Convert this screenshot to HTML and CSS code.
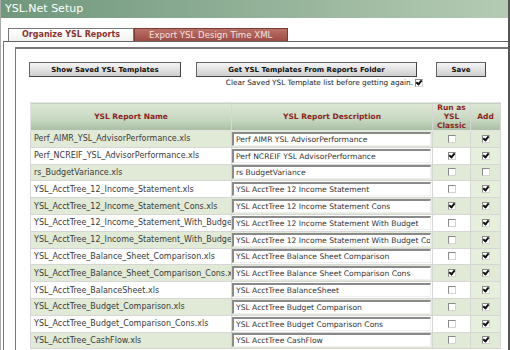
FILE: index.html
```html
<!DOCTYPE html>
<html lang="en">
<head>
  <meta charset="UTF-8" />
  <title>YSL.Net Setup</title>
  <link rel="stylesheet" href="styles.css">
</head>
<body>

<div class="window">
  <div class="titlebar">YSL.Net Setup</div>

  <div class="tabs">
    <div class="tab active">Organize YSL Reports</div>
    <div class="tab">Export YSL Design Time XML</div>
  </div>

  <div class="tabpanel">
    <div class="panel">

      <!-- toolbar -->
      <div class="toolbar">
        <button class="btn btn-show">Show Saved YSL Templates</button>
        <div class="getgroup">
          <button class="btn btn-get">Get YSL Templates From Reports Folder</button>
          <div class="clear">Clear Saved YSL Template list before getting again. <span class="cb on"></span></div>
        </div>
        <button class="btn btn-save">Save</button>
      </div>

      <table class="reports">
        <thead>
          <tr>
            <th class="c-name">YSL Report Name</th>
            <th class="c-desc">YSL Report Description</th>
            <th class="c-run">Run as YSL Classic</th>
            <th class="c-add">Add</th>
          </tr>
        </thead>
        <tbody>
          <tr class="alt">
            <td>Perf_AIMR_YSL_AdvisorPerformance.xls</td>
            <td><input class="desc" type="text" value="Perf AIMR YSL AdvisorPerformance"></td>
            <td class="chk"><span class="cb"></span></td>
            <td class="chk"><span class="cb on"></span></td>
          </tr>
          <tr>
            <td>Perf_NCREIF_YSL_AdvisorPerformance.xls</td>
            <td><input class="desc" type="text" value="Perf NCREIF YSL AdvisorPerformance"></td>
            <td class="chk"><span class="cb on"></span></td>
            <td class="chk"><span class="cb on"></span></td>
          </tr>
          <tr class="alt">
            <td>rs_BudgetVariance.xls</td>
            <td><input class="desc" type="text" value="rs BudgetVariance"></td>
            <td class="chk"><span class="cb"></span></td>
            <td class="chk"><span class="cb"></span></td>
          </tr>
          <tr>
            <td>YSL_AcctTree_12_Income_Statement.xls</td>
            <td><input class="desc" type="text" value="YSL AcctTree 12 Income Statement"></td>
            <td class="chk"><span class="cb"></span></td>
            <td class="chk"><span class="cb on"></span></td>
          </tr>
          <tr class="alt">
            <td>YSL_AcctTree_12_Income_Statement_Cons.xls</td>
            <td><input class="desc" type="text" value="YSL AcctTree 12 Income Statement Cons"></td>
            <td class="chk"><span class="cb on"></span></td>
            <td class="chk"><span class="cb on"></span></td>
          </tr>
          <tr>
            <td>YSL_AcctTree_12_Income_Statement_With_Budget.xls</td>
            <td><input class="desc" type="text" value="YSL AcctTree 12 Income Statement With Budget"></td>
            <td class="chk"><span class="cb"></span></td>
            <td class="chk"><span class="cb on"></span></td>
          </tr>
          <tr class="alt">
            <td>YSL_AcctTree_12_Income_Statement_With_Budget_Cons.xls</td>
            <td><input class="desc" type="text" value="YSL AcctTree 12 Income Statement With Budget Cons"></td>
            <td class="chk"><span class="cb"></span></td>
            <td class="chk"><span class="cb on"></span></td>
          </tr>
          <tr>
            <td>YSL_AcctTree_Balance_Sheet_Comparison.xls</td>
            <td><input class="desc" type="text" value="YSL AcctTree Balance Sheet Comparison"></td>
            <td class="chk"><span class="cb"></span></td>
            <td class="chk"><span class="cb on"></span></td>
          </tr>
          <tr class="alt">
            <td>YSL_AcctTree_Balance_Sheet_Comparison_Cons.xls</td>
            <td><input class="desc" type="text" value="YSL AcctTree Balance Sheet Comparison Cons"></td>
            <td class="chk"><span class="cb on"></span></td>
            <td class="chk"><span class="cb on"></span></td>
          </tr>
          <tr>
            <td>YSL_AcctTree_BalanceSheet.xls</td>
            <td><input class="desc" type="text" value="YSL AcctTree BalanceSheet"></td>
            <td class="chk"><span class="cb"></span></td>
            <td class="chk"><span class="cb on"></span></td>
          </tr>
          <tr class="alt">
            <td>YSL_AcctTree_Budget_Comparison.xls</td>
            <td><input class="desc" type="text" value="YSL AcctTree Budget Comparison"></td>
            <td class="chk"><span class="cb"></span></td>
            <td class="chk"><span class="cb on"></span></td>
          </tr>
          <tr>
            <td>YSL_AcctTree_Budget_Comparison_Cons.xls</td>
            <td><input class="desc" type="text" value="YSL AcctTree Budget Comparison Cons"></td>
            <td class="chk"><span class="cb"></span></td>
            <td class="chk"><span class="cb on"></span></td>
          </tr>
          <tr class="alt">
            <td>YSL_AcctTree_CashFlow.xls</td>
            <td><input class="desc" type="text" value="YSL AcctTree CashFlow"></td>
            <td class="chk"><span class="cb"></span></td>
            <td class="chk"><span class="cb on"></span></td>
          </tr>
        </tbody>
      </table>

    </div>
  </div>
</div>

</body>
</html>
```

FILE: styles.css
```css
* { box-sizing: border-box; margin: 0; padding: 0; }
html, body {
  width: 100%;
  height: 100%;
  overflow: hidden;
  background: #fff;
  font-family: "DejaVu Sans", Verdana, sans-serif;
  color: #333;
}

.window {
  height: 350px;
  border-left: 1px solid #aaa;
  border-right: 2px solid #555;
  overflow: hidden;
}

.titlebar {
  height: 18px;
  padding-left: 4px;
  line-height: 18px;
  font-size: 11px;
  color: #fff;
  background: linear-gradient(to right, #6f977c, #b5cbb3);
}

/* tabs */
.tabs {
  display: flex;
  margin-top: 10px;
  padding-left: 7px;
  height: 13px;
}

.tab {
  height: 13px;
  padding: 0 11px;
  line-height: 12px;
  font-size: 8px;
  border: 1px solid #777;
  border-bottom: none;
}

.tab.active {
  width: 126px;
  font-weight: bold;
  color: #8a3430;
  background: linear-gradient(#fff, #f1f1ee);
  text-align: center;
}

.tab:not(.active) {
  width: 154px;
  font-size: 8.6px;
  color: #f4e4e0;
  background: linear-gradient(#bb7067, #9d4c45);
  border-color: #7a3a35;
  padding-left: 14px;
}

.tabpanel {
  margin-left: 2px;
  padding: 5px 0 0 11px;
  border-top: 1px solid #666;
  border-left: 1px solid #777;
  height: 400px;
}

.panel {
  height: 100%;
  border-top: 2px solid #777;
  border-left: 1px solid #777;
  padding: 13px 0 0 13px;
}

/* toolbar */
.toolbar {
  display: flex;
  align-items: flex-start;
}

.btn {
  height: 15px;
  font-family: inherit;
  font-size: 7px;
  font-weight: bold;
  color: #111;
  border: 1px solid #666;
  border-right-color: #444;
  border-bottom-color: #444;
  background: linear-gradient(#f4f4f4, #cfcfcf);
}

.btn-show { width: 152px; }
.btn-get  { width: 221px; }
.btn-save { width: 50px; margin-left: 19px; }

.getgroup {
  margin-left: 15px;
  display: flex;
  flex-direction: column;
  align-items: flex-end;
}

.clear {
  margin-top: 1px;
  margin-right: -6px;
  font-size: 7.3px;
  color: #222;
  display: flex;
  align-items: center;
  gap: 2px;
}

/* checkboxes */
.cb {
  display: inline-block;
  position: relative;
  width: 8px;
  height: 8px;
  border: 1px solid #8a8a8a;
  border-right-color: #d4d4d4;
  border-bottom-color: #d4d4d4;
  background: #fff;
  vertical-align: middle;
}

.cb.on::after {
  content: "";
  position: absolute;
  left: 1px;
  top: -1px;
  width: 2px;
  height: 4px;
  border-right: 2px solid #111;
  border-bottom: 2px solid #111;
  transform: rotate(40deg);
}

/* table */
.reports {
  margin-top: 15px;
  margin-left: 1px;
  width: 470px;
  table-layout: fixed;
  border-collapse: collapse;
  font-size: 8px;
  border: 1px solid #cfcfcf;
}

.reports th {
  height: 28px;
  color: #8b1f1f;
  font-size: 7.5px;
  font-weight: bold;
  background: linear-gradient(#dce8d6, #c6d8c0 60%, #a7bea2);
  border: 1px solid #e4e4e4;
  border-right-color: #d6d6d6;
  line-height: 9px;
}

.c-name { width: 201px; }
.c-desc { width: 201px; }
.c-run  { width: 38px; padding: 0 3px; }
.c-add  { width: 30px; }

.reports td {
  height: 16.8px;
  padding: 0 0 0 3px;
  white-space: nowrap;
  overflow: hidden;
  border: 1px solid #d6d6d6;
  color: #3a3a3a;
  background: #fff;
}

.reports tr.alt td { background: #e1ead6; }

.reports td.chk {
  padding: 0;
  text-align: center;
  background: #fff;
}

.reports tr td.chk:last-child { background: #e6eedc; }
.reports tr.alt td.chk { background: #e1ead6; }

.desc {
  display: block;
  width: 199px;
  height: 14px;
  margin-left: -3px;
  padding-left: 2px;
  font-family: inherit;
  font-size: 7.6px;
  color: #333;
  border: 1px solid #999;
  border-top: 2px solid #8a8a8a;
  border-left: 2px solid #8a8a8a;
  border-right-color: #eee;
  border-bottom-color: #eee;
  background: #fff;
}
```
